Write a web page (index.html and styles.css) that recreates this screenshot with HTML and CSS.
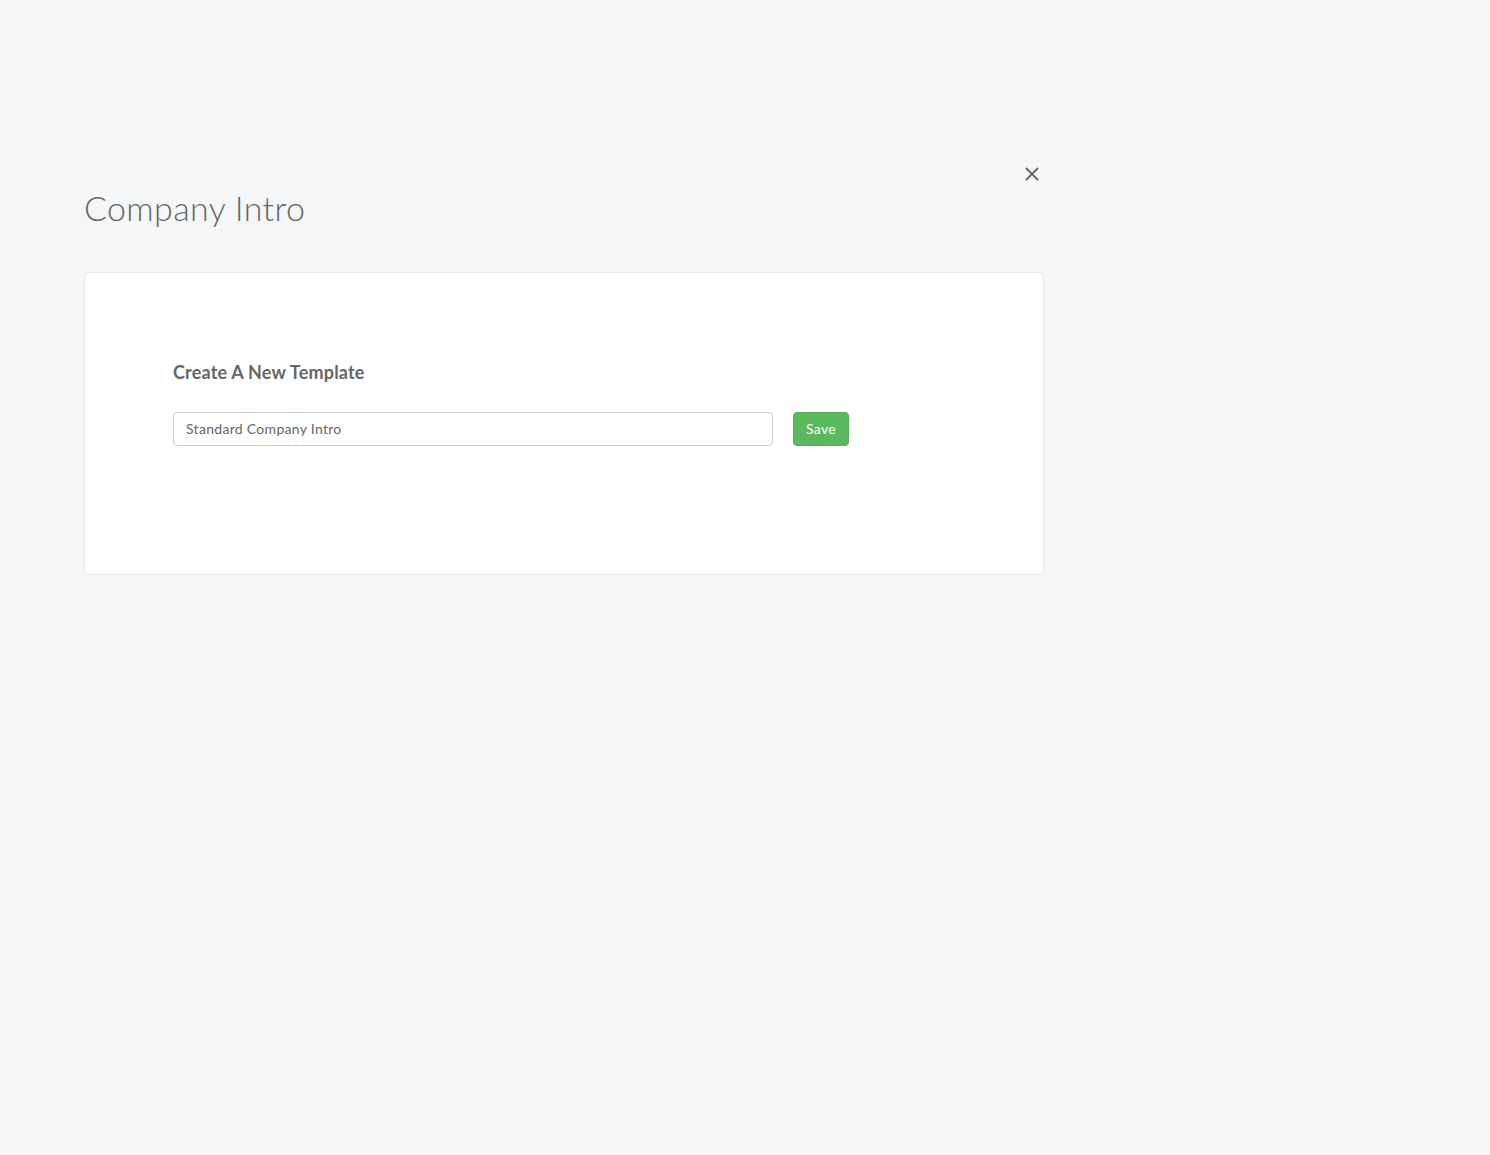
FILE: index.html
```html
<!DOCTYPE html>
<html>
<head>
<meta charset="utf-8">
<link rel="stylesheet" href="styles.css">
</head>
<body>
<div class="page">
  <div class="top">
    <button class="close" aria-label="Close">
      <svg width="14" height="14" viewBox="0 0 14 14"><path d="M1 1 L13 13 M13 1 L1 13" stroke="#666" stroke-width="1.8" fill="none"/></svg>
    </button>
  </div>
  <h1 class="title">Company Intro</h1>
  <div class="card">
    <h2 class="card-title">Create A New Template</h2>
    <div class="row">
      <input class="field" type="text" value="Standard Company Intro">
      <button class="save">Save</button>
    </div>
  </div>
</div>
</body>
</html>
```
FILE: styles.css
```css
html, body { margin: 0; padding: 0; }
body {
  background: #f5f6f8;
  font-family: Lato, "Open Sans", sans-serif;
  color: #666;
  height: 1155px;
}
.page {
  width: 960px;
  margin-left: 84px;
  padding-top: 167px;
}
.top {
  display: flex;
  justify-content: flex-end;
  height: 14px;
}
.close {
  background: none;
  border: 0;
  padding: 0;
  margin-right: 5px;
  width: 14px;
  height: 14px;
  display: flex;
  cursor: pointer;
}
.title {
  margin: 2px 0 0 0;
  font-size: 34px;
  font-weight: 300;
  color: #666;
  line-height: 50px;
  letter-spacing: 0.35px;
}
.card {
  margin-top: 39px;
  background: #fff;
  border: 1px solid #e6e7ea;
  border-radius: 4px;
  box-sizing: border-box;
  height: 303px;
  padding: 87px 88px 0 88px;
}
.card-title {
  margin: 0;
  font-size: 18px;
  font-weight: 700;
  color: #666;
  line-height: 24px;
  letter-spacing: 0.2px;
}
.row {
  margin-top: 28px;
  display: flex;
  gap: 20px;
}
.field {
  width: 600px;
  height: 34px;
  box-sizing: border-box;
  border: 1px solid #ccc;
  border-radius: 4px;
  padding: 0 12px 1px 12px;
  font-family: Lato, "Open Sans", sans-serif;
  font-size: 14px;
  letter-spacing: 0.3px;
  color: #666;
  outline: none;
  background: #fff;
}
.save {
  width: 56px;
  height: 34px;
  border: 1px solid #52b056;
  border-radius: 4px;
  background: #5cb85c;
  color: #fff;
  font-family: Lato, "Open Sans", sans-serif;
  font-size: 14px;
  letter-spacing: 0.3px;
  padding: 0 0 1px 0;
  cursor: pointer;
}
```
